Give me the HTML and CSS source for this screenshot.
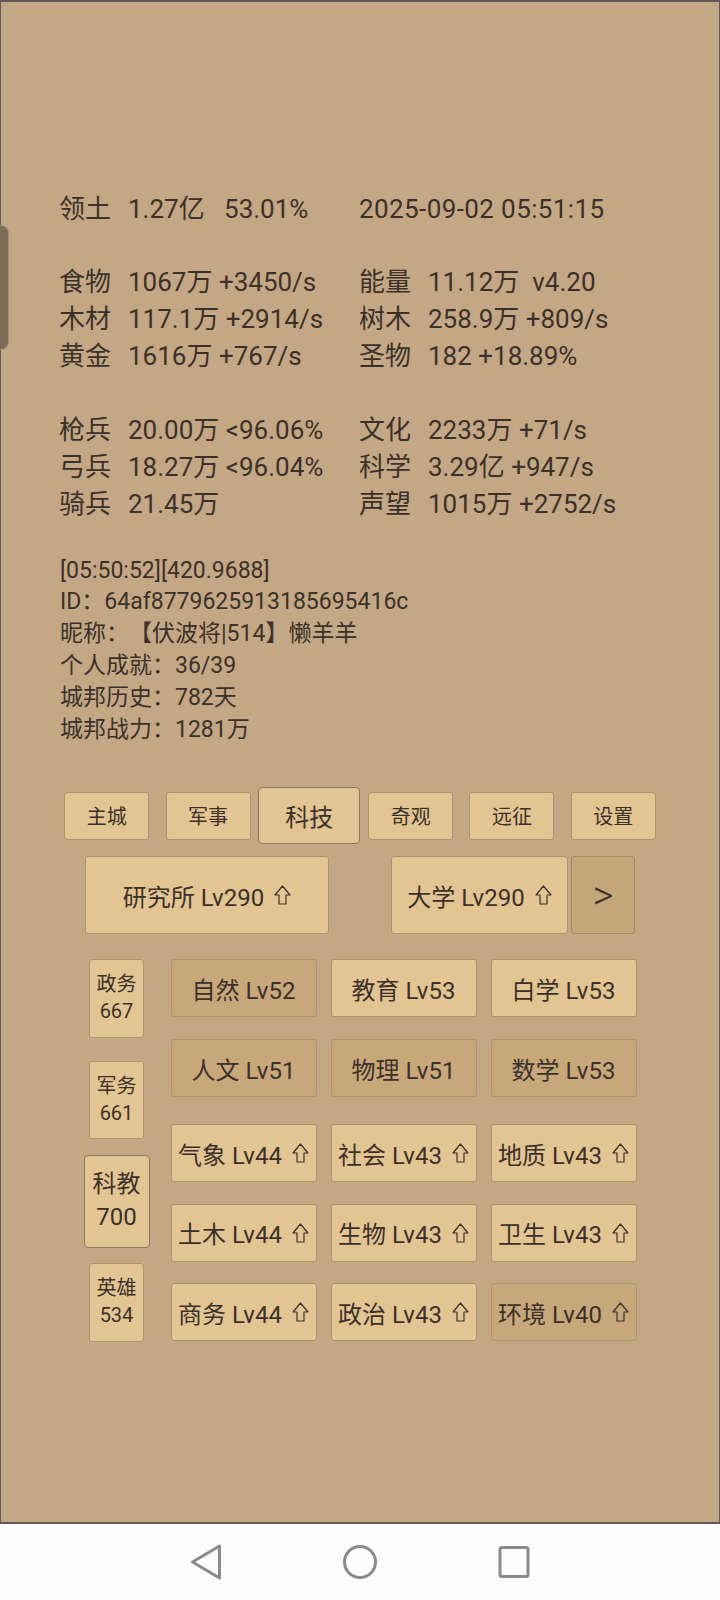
FILE: index.html
```html
<!DOCTYPE html>
<html lang="zh-CN">
<head>
<meta charset="utf-8">
<title>城邦</title>
<link rel="stylesheet" href="styles.css">
</head>
<body>
<svg class="defs" width="0" height="0" aria-hidden="true">
  <symbol id="up" viewBox="0 0 17 20">
    <path d="M8.5 1 L16 10 H12 V19 H5 V10 H1 Z" fill="none" stroke="currentColor" stroke-width="1.2" stroke-linejoin="round"/>
  </symbol>
</svg>
<div class="screen">
  <main class="panel">
    <div class="handle"></div>

    <section class="stats">
      <div class="group">
        <div class="cell"><span class="lbl">领土</span><span class="val">1.27亿   53.01%</span></div>
        <div class="cell"><span class="val date">2025-09-02 05:51:15</span></div>
      </div>
      <div class="group">
        <div class="cell"><span class="lbl">食物</span><span class="val">1067万 +3450/s</span></div>
        <div class="cell"><span class="lbl">能量</span><span class="val">11.12万  v4.20</span></div>
        <div class="cell"><span class="lbl">木材</span><span class="val">117.1万 +2914/s</span></div>
        <div class="cell"><span class="lbl">树木</span><span class="val">258.9万 +809/s</span></div>
        <div class="cell"><span class="lbl">黄金</span><span class="val">1616万 +767/s</span></div>
        <div class="cell"><span class="lbl">圣物</span><span class="val">182 +18.89%</span></div>
      </div>
      <div class="group">
        <div class="cell"><span class="lbl">枪兵</span><span class="val">20.00万 &lt;96.06%</span></div>
        <div class="cell"><span class="lbl">文化</span><span class="val">2233万 +71/s</span></div>
        <div class="cell"><span class="lbl">弓兵</span><span class="val">18.27万 &lt;96.04%</span></div>
        <div class="cell"><span class="lbl">科学</span><span class="val">3.29亿 +947/s</span></div>
        <div class="cell"><span class="lbl">骑兵</span><span class="val">21.45万</span></div>
        <div class="cell"><span class="lbl">声望</span><span class="val">1015万 +2752/s</span></div>
      </div>
    </section>

    <section class="info">
      <p>[05:50:52][420.9688]</p>
      <p>ID：64af8779625913185695416c</p>
      <p>昵称：【伏波将|514】懒羊羊</p>
      <p>个人成就：36/39</p>
      <p>城邦历史：782天</p>
      <p>城邦战力：1281万</p>
    </section>

    <nav class="tabs">
      <div class="slot"><div class="btn tab">主城</div></div>
      <div class="slot"><div class="btn tab">军事</div></div>
      <div class="slot"><div class="btn tab active">科技</div></div>
      <div class="slot"><div class="btn tab">奇观</div></div>
      <div class="slot"><div class="btn tab">远征</div></div>
      <div class="slot"><div class="btn tab">设置</div></div>
    </nav>

    <div class="research">
      <div class="btn big wide">研究所 Lv290<svg class="arrow"><use href="#up"/></svg></div>
      <div class="rgroup">
        <div class="btn big uni">大学 Lv290<svg class="arrow"><use href="#up"/></svg></div>
        <div class="btn big next">&gt;</div>
      </div>
    </div>

    <div class="tech">
      <div class="side">
        <div class="sslot"><div class="btn sbtn"><span>政务</span><span>667</span></div></div>
        <div class="sslot"><div class="btn sbtn"><span>军务</span><span>661</span></div></div>
        <div class="sslot"><div class="btn sbtn active"><span>科教</span><span>700</span></div></div>
        <div class="sslot"><div class="btn sbtn"><span>英雄</span><span>534</span></div></div>
      </div>
      <div class="grids">
        <div class="grid first">
          <div class="btn tb dim">自然 Lv52</div>
          <div class="btn tb">教育 Lv53</div>
          <div class="btn tb">白学 Lv53</div>
          <div class="btn tb dim">人文 Lv51</div>
          <div class="btn tb dim">物理 Lv51</div>
          <div class="btn tb dim">数学 Lv53</div>
        </div>
        <div class="grid second">
          <div class="btn tb">气象 Lv44<svg class="arrow"><use href="#up"/></svg></div>
          <div class="btn tb">社会 Lv43<svg class="arrow"><use href="#up"/></svg></div>
          <div class="btn tb">地质 Lv43<svg class="arrow"><use href="#up"/></svg></div>
          <div class="btn tb">土木 Lv44<svg class="arrow"><use href="#up"/></svg></div>
          <div class="btn tb">生物 Lv43<svg class="arrow"><use href="#up"/></svg></div>
          <div class="btn tb">卫生 Lv43<svg class="arrow"><use href="#up"/></svg></div>
          <div class="btn tb">商务 Lv44<svg class="arrow"><use href="#up"/></svg></div>
          <div class="btn tb">政治 Lv43<svg class="arrow"><use href="#up"/></svg></div>
          <div class="btn tb dim">环境 Lv40<svg class="arrow"><use href="#up"/></svg></div>
        </div>
      </div>
    </div>
  </main>

  <footer class="navbar">
    <svg class="navicon" viewBox="0 0 40 40"><path d="M33.5 4 V36 L6.5 20 Z" fill="none" stroke="#8a8a8a" stroke-width="3" stroke-linejoin="round"/></svg>
    <svg class="navicon" viewBox="0 0 40 40"><circle cx="20" cy="20" r="15.5" fill="none" stroke="#8a8a8a" stroke-width="3"/></svg>
    <svg class="navicon" viewBox="0 0 40 40"><rect x="6" y="5.5" width="28" height="29" rx="2" fill="none" stroke="#8a8a8a" stroke-width="3"/></svg>
  </footer>
</div>
</body>
</html>
```

FILE: styles.css
```css
* {
  box-sizing: border-box;
  margin: 0;
  padding: 0;
}

html, body {
  width: 720px;
  height: 1600px;
  overflow: hidden;
}

body {
  font-family: Roboto, "Noto Sans CJK SC", sans-serif;
  color: #3b3128;
  background: #fdfdfd;
  text-spacing-trim: space-all;
}

.defs {
  position: absolute;
  width: 0;
  height: 0;
}

.screen {
  width: 720px;
  height: 1600px;
  display: flex;
  flex-direction: column;
}

.panel {
  position: relative;
  height: 1524px;
  flex: none;
  background: #c4a886;
  border: 1px solid #5f5a55;
  border-top-width: 2px;
  border-bottom-width: 2px;
  padding-top: 188.6px;
}

.handle {
  position: absolute;
  left: -1px;
  top: 223px;
  width: 9px;
  height: 125px;
  background: #7b6b59;
  border: 1px solid #a3937a;
  border-left: none;
  border-radius: 0 8px 8px 0;
}

/* stats */
.stats {
  padding-left: 58px;
  font-size: 26px;
  line-height: 36.95px;
}

.group {
  display: grid;
  grid-template-columns: 300px 1fr;
}

.group + .group {
  margin-top: 36.95px;
}

.cell {
  display: flex;
  gap: 17px;
  white-space: pre;
}

.lbl {
  width: 52px;
  flex: none;
}

.date {
  letter-spacing: 0.4px;
}

/* info */
.info {
  margin-top: 31.5px;
  padding-left: 59px;
  font-size: 23px;
  line-height: 31.8px;
}

/* buttons */
.btn {
  display: flex;
  align-items: center;
  justify-content: center;
  background: #e3c593;
  border: 1px solid #ae946c;
  border-radius: 3px;
  white-space: nowrap;
}

.btn.dim {
  background: #c8a87b;
}

.arrow {
  width: 17px;
  height: 20px;
  margin-left: 10px;
  flex: none;
  color: #3b3128;
}

/* tabs */
.tabs {
  margin-top: 42px;
  display: flex;
  justify-content: center;
  height: 57px;
}

.slot {
  width: 101.33px;
  display: flex;
  align-items: center;
  justify-content: center;
}

.tab {
  width: 85px;
  height: 48px;
  font-size: 20px;
}

.tab.active {
  width: 102px;
  height: 57px;
  flex: none;
  font-size: 24px;
  border-color: #8c785f;
  border-radius: 4px;
}

/* research */
.research {
  margin-top: 12px;
  display: flex;
  justify-content: center;
  gap: 62px;
  height: 78px;
}

.big {
  height: 78px;
  font-size: 24px;
}

.wide {
  width: 244px;
}

.rgroup {
  display: flex;
  gap: 3px;
}

.uni {
  width: 177px;
}

.next {
  width: 64px;
  background: #c5a679;
  border-color: #a38864;
  font-size: 40px;
  font-weight: 300;
}

/* tech */
.tech {
  margin-top: 13.4px;
  display: flex;
  justify-content: center;
  gap: 21px;
}

.side {
  width: 66px;
  display: flex;
  flex-direction: column;
}

.sslot {
  height: 101.33px;
  display: flex;
  align-items: center;
  justify-content: center;
}

.sbtn {
  width: 55px;
  height: 78.5px;
  flex-direction: column;
  font-size: 20px;
  line-height: 27px;
}

.sbtn.active {
  width: 66px;
  height: 93px;
  font-size: 24px;
  line-height: 33px;
  border-color: #8c785f;
  border-radius: 4px;
}

.grids {
  padding-top: 11.6px;
}

.grid {
  display: grid;
  grid-template-columns: repeat(3, 146px);
  grid-auto-rows: 58px;
  column-gap: 14px;
}

.grid.first {
  row-gap: 22px;
}

.grid.second {
  margin-top: 27px;
  row-gap: 21.5px;
}

.tb {
  font-size: 24px;
}

/* android nav */
.navbar {
  flex: 1;
  display: grid;
  grid-template-columns: repeat(3, 154px);
  justify-content: center;
  align-items: center;
  justify-items: center;
  background: #fdfdfd;
}

.navicon {
  width: 40px;
  height: 40px;
}
```
